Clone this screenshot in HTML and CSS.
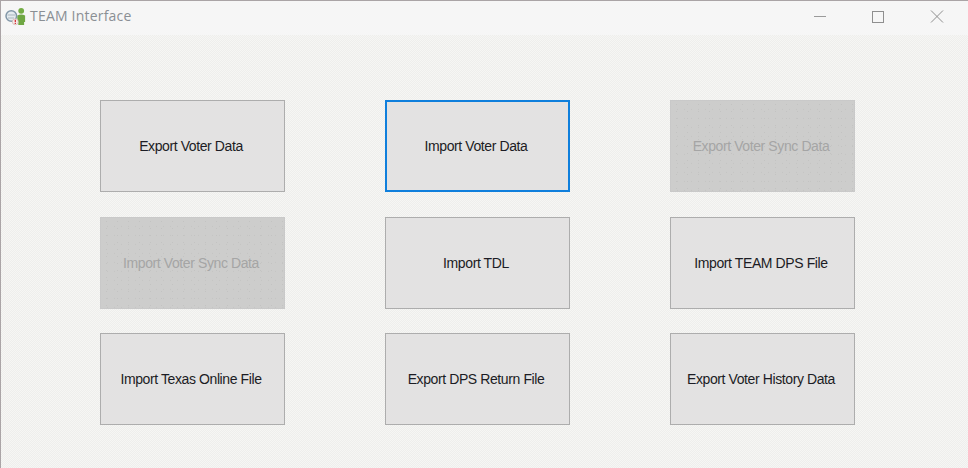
FILE: index.html
```html
<!DOCTYPE html>
<html lang="en">
<head>
<meta charset="utf-8">
<title>TEAM Interface</title>
<link rel="stylesheet" href="styles.css">
</head>
<body>
<div class="window">
  <header class="titlebar">
    <div class="title-left">
      <svg class="app-icon" width="21" height="20" viewBox="0 0 21 20">
        <circle cx="16.200" cy="4.800" r="2.900" fill="#74ad45"/>
        <path d="M12.300 9.500q3.900-2.200 7.800 0v6.500h-1v3h-5.800v-3h-1z" fill="#6fa743"/>
        <circle cx="6.300" cy="10" r="5.300" fill="#e4ebef" stroke="#8297a8" stroke-width="1.500"/>
        <path d="M2.500 9h7.500M3 12h6" stroke="#a9b5be" stroke-width="1"/>
        <circle cx="10.300" cy="15.800" r="3" fill="#f6ecea" stroke="#cdaeaa" stroke-width=".6"/>
        <path d="M10.300 13.800v2.500M10.300 17v1" stroke="#d3232a" stroke-width="1.200"/>
      </svg>
      <span class="title-text">TEAM Interface</span>
    </div>
    <div class="controls">
      <svg class="ctl" width="46" height="34" viewBox="0 0 46 34"><path d="M16 15.500h12" stroke="#9a9a9a" fill="none"/></svg>
      <svg class="ctl" width="46" height="34" viewBox="0 0 46 34"><rect x="16.500" y="10.500" width="11" height="11" stroke="#8f8f8f" fill="none"/></svg>
      <svg class="ctl" width="46" height="34" viewBox="0 0 46 34"><path d="M17 9.500l12 12M29 9.500l-12 12" stroke="#8f8f8f" fill="none"/></svg>
    </div>
  </header>
  <main class="content">
    <div class="grid">
      <button class="btn">Export Voter Data</button>
      <button class="btn focused">Import Voter Data</button>
      <button class="btn" disabled>Export Voter Sync Data</button>
      <button class="btn" disabled>Import Voter Sync Data</button>
      <button class="btn">Import TDL</button>
      <button class="btn">Import TEAM DPS File</button>
      <button class="btn">Import Texas Online File</button>
      <button class="btn">Export DPS Return File</button>
      <button class="btn">Export Voter History Data</button>
    </div>
  </main>
</div>
</body>
</html>
```
FILE: styles.css
```css
html, body {
  margin: 0;
  padding: 0;
}
body {
  width: 968px;
  height: 468px;
  overflow: hidden;
  font-family: "Liberation Sans", Arial, sans-serif;
}
.window {
  box-sizing: border-box;
  width: 968px;
  height: 468px;
  display: flex;
  flex-direction: column;
  border-top: 1px solid #aaa4a6;
  border-left: 1px solid #aaa4a6;
}
.titlebar {
  flex: 0 0 33px;
  display: flex;
  justify-content: space-between;
  background: #f6f6f6;
}
.title-left {
  display: flex;
  align-items: center;
  padding: 0 0 5px 4px;
  gap: 4px;
}
.title-text {
  font-family: "Open Sans", "Liberation Sans", sans-serif;
  font-size: 14px;
  letter-spacing: 0.2px;
  color: #8a8f94;
}
.controls {
  display: flex;
  gap: 12px;
  padding-right: 8px;
}
.ctl {
  display: block;
}
.content {
  flex: 1;
  padding: 65px 0 0 99px;
  background-color: #f2f2f0;
  background-image: repeating-conic-gradient(#eeeeec 0 25%, #f6f6f4 0 50%);
  background-size: 2px 2px;
}
.grid {
  display: grid;
  grid-template-columns: repeat(3, 185px);
  grid-auto-rows: 92px;
  column-gap: 100px;
  row-gap: 24.5px;
}
.btn {
  box-sizing: border-box;
  margin: 0;
  padding: 0 3px 0 0;
  font-family: "Liberation Sans", Arial, sans-serif;
  font-size: 14px;
  letter-spacing: -0.4px;
  color: #1c1c24;
  background-color: #e3e2e2;
  border: 1px solid #adadad;
  border-radius: 0;
}
.btn.focused {
  border: 2px solid #0f7fdc;
}
.btn:disabled {
  color: #a5a5a5;
  border-color: #c9c9c9;
  background-color: #cdcdcc;
  background-image:
    radial-gradient(#c3c3c2 .5px, transparent .8px),
    radial-gradient(#c5c5c4 .5px, transparent .8px);
  background-size: 11px 7px, 7px 9px;
  background-position: 0 0, 3px 4px;
}
```
